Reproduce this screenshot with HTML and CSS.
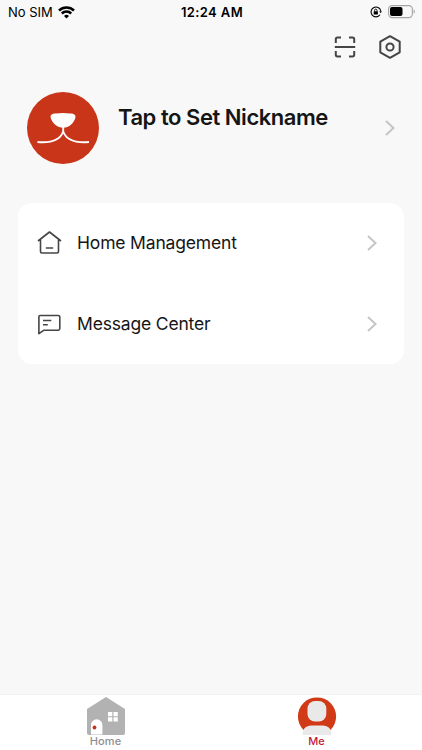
FILE: index.html
```html
<!DOCTYPE html>
<html lang="en">
<head>
    <meta charset="UTF-8">
    <meta name="viewport" content="width=device-width, initial-scale=1.0">
    <title>Me</title>
    <link rel="stylesheet" href="styles.css">
</head>
<body>

<div class="app">
    <header class="status-bar">
        <div class="carrier">
            <span>No SIM</span>
            <svg width="17" height="13" viewBox="0 0 17 13" fill="none" stroke="#000" stroke-width="2.5">
                <path d="M1 4.5a10.6 10.6 0 0 1 15 0"/>
                <path d="M3.8 7.5a6.7 6.7 0 0 1 9.400 0"/>
                <path d="M8.5 12.400L6 9.900a3.600 3.600 0 0 1 5 0z" fill="#000" stroke="none"/>
            </svg>
        </div>
        <div class="time">12:24 AM</div>
        <div class="indicators">
            <svg width="12" height="12" viewBox="0 0 12 12" fill="none" stroke="#000">
                <path d="M10 8.8A4.9 4.9 0 1 1 10.8 5" stroke-width="1.1"/>
                <path d="M9.2 5.2h2.7l-1.3 2z" fill="#000" stroke="none"/>
                <rect x="3.7" y="5.3" width="4.2" height="3.3" rx=".5" fill="#000" stroke="none"/>
                <path d="M4.600 5.400V4.300a1.200 1.200 0 0 1 2.400 0v1.100" stroke-width=".9"/>
            </svg>
            <svg width="28" height="14" viewBox="0 0 28 14">
                <rect x=".6" y=".6" width="23.800" height="12" rx="3.600" fill="none" stroke="#a3a3a3" stroke-width="1.100"/>
                <rect x="2" y="2.100" width="12.500" height="9" rx="2" fill="#000"/>
                <path d="M25.700 4.500c1.600.7 1.600 3.500 0 4.200z" fill="#a3a3a3"/>
            </svg>
        </div>
    </header>

    <div class="toolbar">
        <svg width="22" height="22" viewBox="0 0 22 22" fill="none" stroke="#454545" stroke-width="2">
            <path d="M1.800 7V3.300Q1.800 1.600 3.500 1.600H7M15 1.600h3.500q1.700 0 1.700 1.700V7M20.200 15v3.700q0 1.700-1.700 1.700H15M7 20.400H3.500q-1.700 0-1.700-1.700V15M.8 11h20.400"/>
        </svg>
        <svg width="24" height="26" viewBox="0 0 24 26" fill="none" stroke="#454545" stroke-width="2" stroke-linejoin="round">
            <path d="M12 2.200l9.700 5.500v10.600L12 23.800l-9.700-5.500V7.700z"/>
            <circle cx="12" cy="13" r="3.600"/>
        </svg>
    </div>

    <section class="profile">
        <svg class="avatar" width="72" height="72" viewBox="0 0 72 72">
            <circle cx="36" cy="36" r="36" fill="#c93519"/>
            <path d="M29 21.500Q36 20.500 43 21.500C47.500 21.600 49 23 48.300 26 47 31 42 35.700 36.200 35.700S25 31 23.800 26C23 23 24.500 21.600 29 21.500z" fill="#fff"/>
            <path d="M36.200 34v6.500M10.500 50C22 51 33 48.500 36.200 39.500 39.500 48.500 50.500 51 62 50" fill="none" stroke="#fff" stroke-width="1.900"/>
        </svg>
        <h1>Tap to Set Nickname</h1>
        <svg class="chevron" width="12" height="18" viewBox="0 0 12 18"><path d="M2 2l7.500 7L2 16"/></svg>
    </section>

    <nav class="menu-card">
        <a class="menu-item">
            <svg class="menu-icon" width="26" height="26" viewBox="0 0 26 26">
                <path d="M2 11L13.500 2 25 11M4.500 9.300V21.500q0 1.500 1.500 1.500h15q1.500 0 1.500-1.500V9.300M9.800 18h7.400"/>
            </svg>
            <span>Home Management</span>
            <svg class="chevron" width="12" height="18" viewBox="0 0 12 18"><path d="M2 2l7.500 7L2 16"/></svg>
        </a>
        <a class="menu-item">
            <svg class="menu-icon" width="26" height="26" viewBox="0 0 26 26">
                <path d="M4.200 4.500h18q1.600 0 1.600 1.600v11.500q0 1.600-1.600 1.600H8L2.900 22.700V6q0-1.500 1.300-1.500zM7 9.500h8.300M7 13.700h4.800"/>
            </svg>
            <span>Message Center</span>
            <svg class="chevron" width="12" height="18" viewBox="0 0 12 18"><path d="M2 2l7.500 7L2 16"/></svg>
        </a>
    </nav>

    <footer class="tab-bar">
        <a class="tab">
            <svg width="40" height="38" viewBox="0 0 40 38">
                <path d="M1 12L20 0l19 12v24q0 2-2 2H3q-2 0-2-2z" fill="#b2b2b2"/>
                <path d="M5 37.500V28a5.700 5.700 0 0 1 11.400 0v9.500z" fill="#fff"/>
                <circle cx="8.500" cy="30.500" r="1.900" fill="#c9301c"/>
                <path d="M22 15h4.300v4.200H22zM27.500 15h4.300v4.200h-4.300zM22 20.300h4.300v4.200H22zM27.500 20.300h4.300v4.200h-4.300z" fill="#fff"/>
            </svg>
            <span>Home</span>
        </a>
        <a class="tab active">
            <svg width="40" height="38" viewBox="0 0 40 38">
                <path d="M6.500 33A19.100 19.100 0 1 1 33.500 33z" fill="#d03a17"/>
                <rect x="10.500" y="4" width="18.800" height="20.500" rx="7.500" fill="#e9e9e9"/>
                <path d="M5.500 38c0-6 3-9.500 9-9.500h11c6 0 9 3.500 9 9.500z" fill="#e9e9e9"/>
            </svg>
            <span>Me</span>
        </a>
    </footer>
</div>

</body>
</html>
```
FILE: styles.css
```css
* {
    box-sizing: border-box;
}
body {
    margin: 0;
    font-family: Inter, "Liberation Sans", sans-serif;
    color: #151515;
}
svg {
    display: block;
    flex-shrink: 0;
}
.app {
    display: flex;
    flex-direction: column;
    height: 100vh;
    background-color: #f8f8f8;
}
.status-bar {
    display: grid;
    grid-template-columns: 1fr auto 1fr;
    align-items: center;
    height: 24px;
    padding: 0 6px 0 8px;
    font-size: 13px;
    color: #000;
}
.carrier {
    display: flex;
    align-items: center;
    gap: 5px;
}
.time {
    font-weight: 600;
    letter-spacing: 0.4px;
}
.indicators {
    display: flex;
    align-items: center;
    justify-content: flex-end;
    gap: 6px;
}
.toolbar {
    display: flex;
    align-items: center;
    justify-content: flex-end;
    gap: 22px;
    height: 46px;
    padding-right: 20px;
}
.profile {
    display: flex;
    align-items: center;
    height: 72px;
    margin: 22px 26px 39px 27px;
}
.profile h1 {
    flex: 1;
    margin: 0 0 22px 19px;
    font-size: 22px;
    line-height: 28px;
    font-weight: 600;
    letter-spacing: -0.46px;
}
.chevron {
    fill: none;
    stroke: #c5c5c5;
    stroke-width: 2;
}
.menu-card {
    height: 161px;
    margin: 0 18px;
    background-color: #fff;
    border-radius: 14px;
}
.menu-item {
    display: flex;
    align-items: center;
    height: 81px;
    padding: 0 26px 2px 18px;
    font-size: 17.5px;
    letter-spacing: -0.17px;
}
.menu-item span {
    flex: 1;
    margin-left: 15px;
}
.menu-icon {
    fill: none;
    stroke: #454545;
    stroke-width: 1.6;
    stroke-linejoin: round;
}
.tab-bar {
    display: flex;
    height: 56px;
    margin-top: auto;
    background-color: #fff;
    border-top: 1px solid #f2f2f2;
}
.tab {
    display: flex;
    flex: 1;
    flex-direction: column;
    align-items: center;
    padding-top: 2px;
    font-size: 11px;
    line-height: 13px;
    font-weight: 500;
    letter-spacing: 0.1px;
    color: #8e8e8e;
}
.tab.active {
    color: #c5173c;
}
```
